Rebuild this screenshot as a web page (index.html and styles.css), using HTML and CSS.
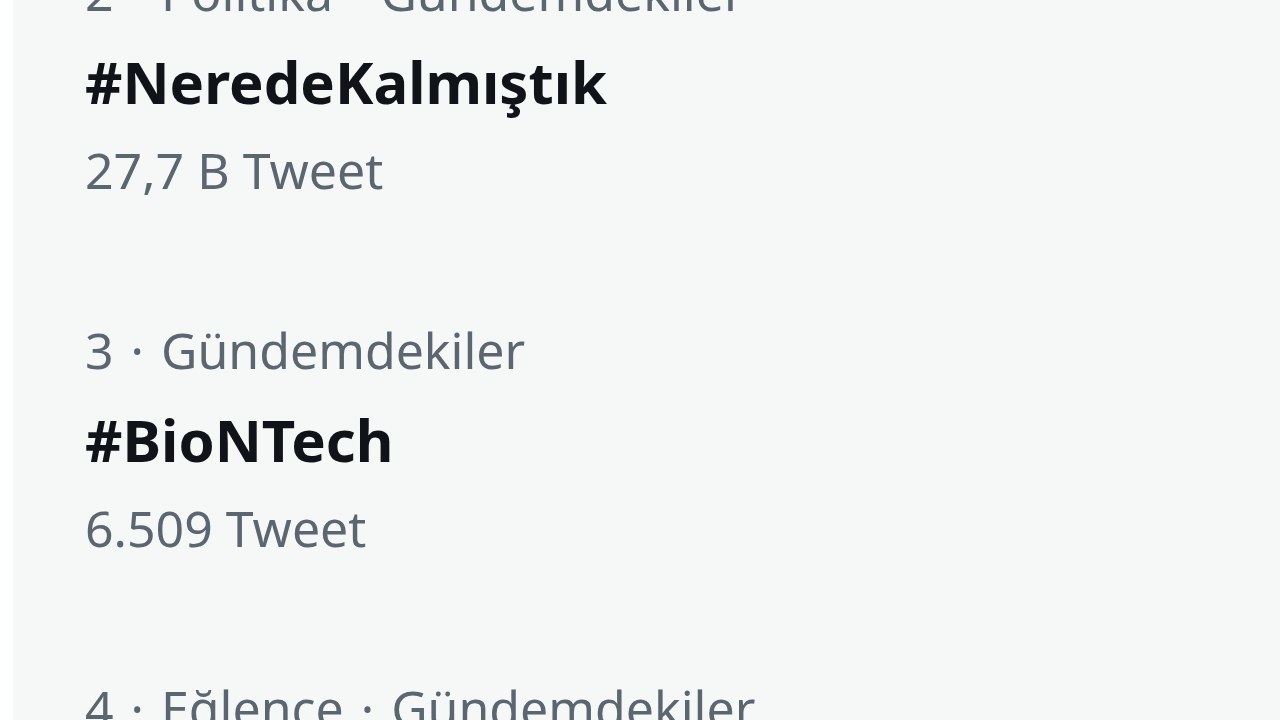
FILE: index.html
```html
<!DOCTYPE html>
<html lang="tr">
<head>
<meta charset="utf-8">
<link rel="stylesheet" href="styles.css">
</head>
<body>
<div class="page">
  <div class="panel">
    <ul class="trends">
      <li class="trend">
        <div class="meta">2<span class="sep">·</span>Politika<span class="sep">·</span>Gündemdekiler</div>
        <div class="title">#NeredeKalmıştık</div>
        <div class="meta">27,7 B Tweet</div>
      </li>
      <li class="trend">
        <div class="meta">3<span class="sep">·</span>Gündemdekiler</div>
        <div class="title">#BioNTech</div>
        <div class="meta">6.509 Tweet</div>
      </li>
      <li class="trend">
        <div class="meta">4<span class="sep">·</span>Eğlence<span class="sep">·</span>Gündemdekiler</div>
      </li>
    </ul>
  </div>
</div>
</body>
</html>
```
FILE: styles.css
```css
html, body {
  margin: 0;
  padding: 0;
  background: #ffffff;
  height: 100%;
  overflow: hidden;
}
.page {
  display: flex;
  height: 720px;
  padding-left: 13px;
  background: #ffffff;
}
.panel {
  flex: 1;
  background: #f6f8f8;
  overflow: hidden;
}
.trends {
  list-style: none;
  margin: -52px 0 0 0;
  padding: 0;
  display: flex;
  flex-direction: column;
  gap: 91px;
}
.trend {
  padding-left: 72px;
  font-family: "Noto Sans", "Open Sans", sans-serif;
}
.meta {
  font-size: 50px;
  line-height: 89px;
  color: #5b6670;
  white-space: nowrap;
}
.sep {
  margin: 0 17px;
}
.title {
  font-size: 58px;
  line-height: 89px;
  font-weight: 700;
  color: #101418;
  white-space: nowrap;
}
```
